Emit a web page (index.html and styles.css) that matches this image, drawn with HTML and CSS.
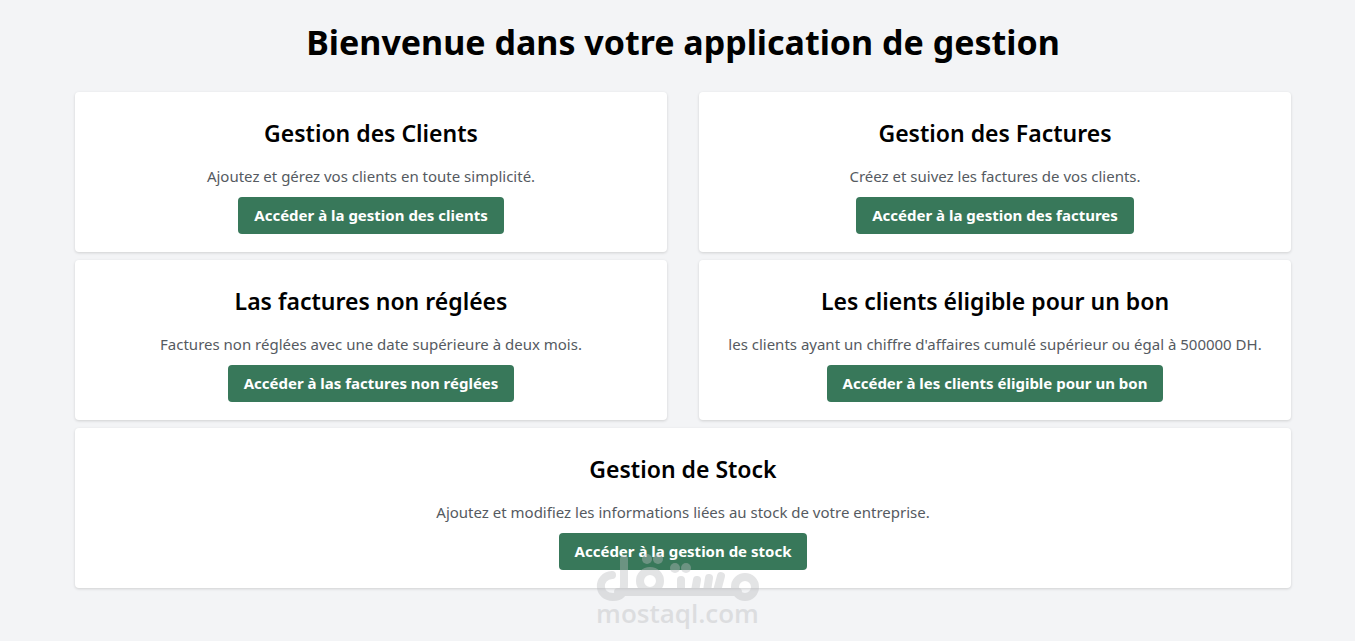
FILE: index.html
```html
<!DOCTYPE html>
<html lang="fr">
<head>
<meta charset="utf-8">
<meta name="viewport" content="width=device-width, initial-scale=1">
<title>Application de gestion</title>
<link rel="stylesheet" href="styles.css">
</head>
<body>
<main class="page">
  <h1 class="title">Bienvenue dans votre application de gestion</h1>
  <div class="grid">
    <section class="card"><h2>Gestion des Clients</h2><p>Ajoutez et gérez vos clients en toute simplicité.</p><a class="btn" href="#">Accéder à la gestion des clients</a></section>
    <section class="card"><h2>Gestion des Factures</h2><p>Créez et suivez les factures de vos clients.</p><a class="btn" href="#">Accéder à la gestion des factures</a></section>
    <section class="card"><h2>Las factures non réglées</h2><p>Factures non réglées avec une date supérieure à deux mois.</p><a class="btn" href="#">Accéder à las factures non réglées</a></section>
    <section class="card"><h2>Les clients éligible pour un bon</h2><p>les clients ayant un chiffre d'affaires cumulé supérieur ou égal à 500000 DH.</p><a class="btn" href="#">Accéder à les clients éligible pour un bon</a></section>
    <section class="card wide"><h2>Gestion de Stock</h2><p>Ajoutez et modifiez les informations liées au stock de votre entreprise.</p><a class="btn" href="#">Accéder à la gestion de stock</a></section>
  </div>
  <div class="watermark">
    <svg width="164" height="48" viewBox="0 0 164 48" fill="none" stroke="currentColor" stroke-width="8" stroke-linecap="round" aria-hidden="true">
      <path d="M16 22C1 23 1 44 17 44C27 44 28 38 28 32V6"/>
      <path d="M22 39H142M85 27V38M101 27L99 38M113 25L111 38M125 23L121 38"/>
      <circle cx="54" cy="28" r="10"/><circle cx="149" cy="34" r="10"/>
      <g fill="currentColor" stroke="none"><circle cx="51" cy="6" r="5"/><circle cx="62" cy="6" r="5"/><circle cx="79" cy="15" r="5"/><circle cx="90" cy="15" r="5"/></g>
    </svg>
    <span>mostaql.com</span>
  </div>
</main>
</body>
</html>
```

FILE: styles.css
```css
* { box-sizing: border-box; }
body { margin: 0; background: #f3f4f6; color: #000; font: 15px/24px "Noto Sans", "Open Sans", sans-serif; }
.page { position: relative; padding: 22px 64px 53px 75px; }
.title { margin: 0 0 30px; font-size: 34px; line-height: 40px; font-weight: 700; text-align: center; }
.grid { display: grid; grid-template-columns: 1fr 1fr; gap: 8px 32px; }
.card { display: flex; flex-direction: column; align-items: center; padding: 24px 16px 18px; text-align: center; background: #fff; border-radius: 4px; box-shadow: 0 1px 3px rgba(0,0,0,.15); }
.wide { grid-column: 1 / -1; }
.card h2 { margin: 0 0 14px; font-size: 23px; line-height: 34px; font-weight: 600; }
.card p { margin: 0 0 9px; color: #555a61; }
.btn { padding: 8px 16px; line-height: 21px; background: #38785a; color: #fff; font-weight: 700; text-decoration: none; border-radius: 4px; }
.watermark { position: absolute; left: 0; right: 0; bottom: 16px; display: flex; flex-direction: column; align-items: center; color: #bbbcbf; opacity: .4; pointer-events: none; font: 600 26px/24px "Open Sans", sans-serif; }
```
